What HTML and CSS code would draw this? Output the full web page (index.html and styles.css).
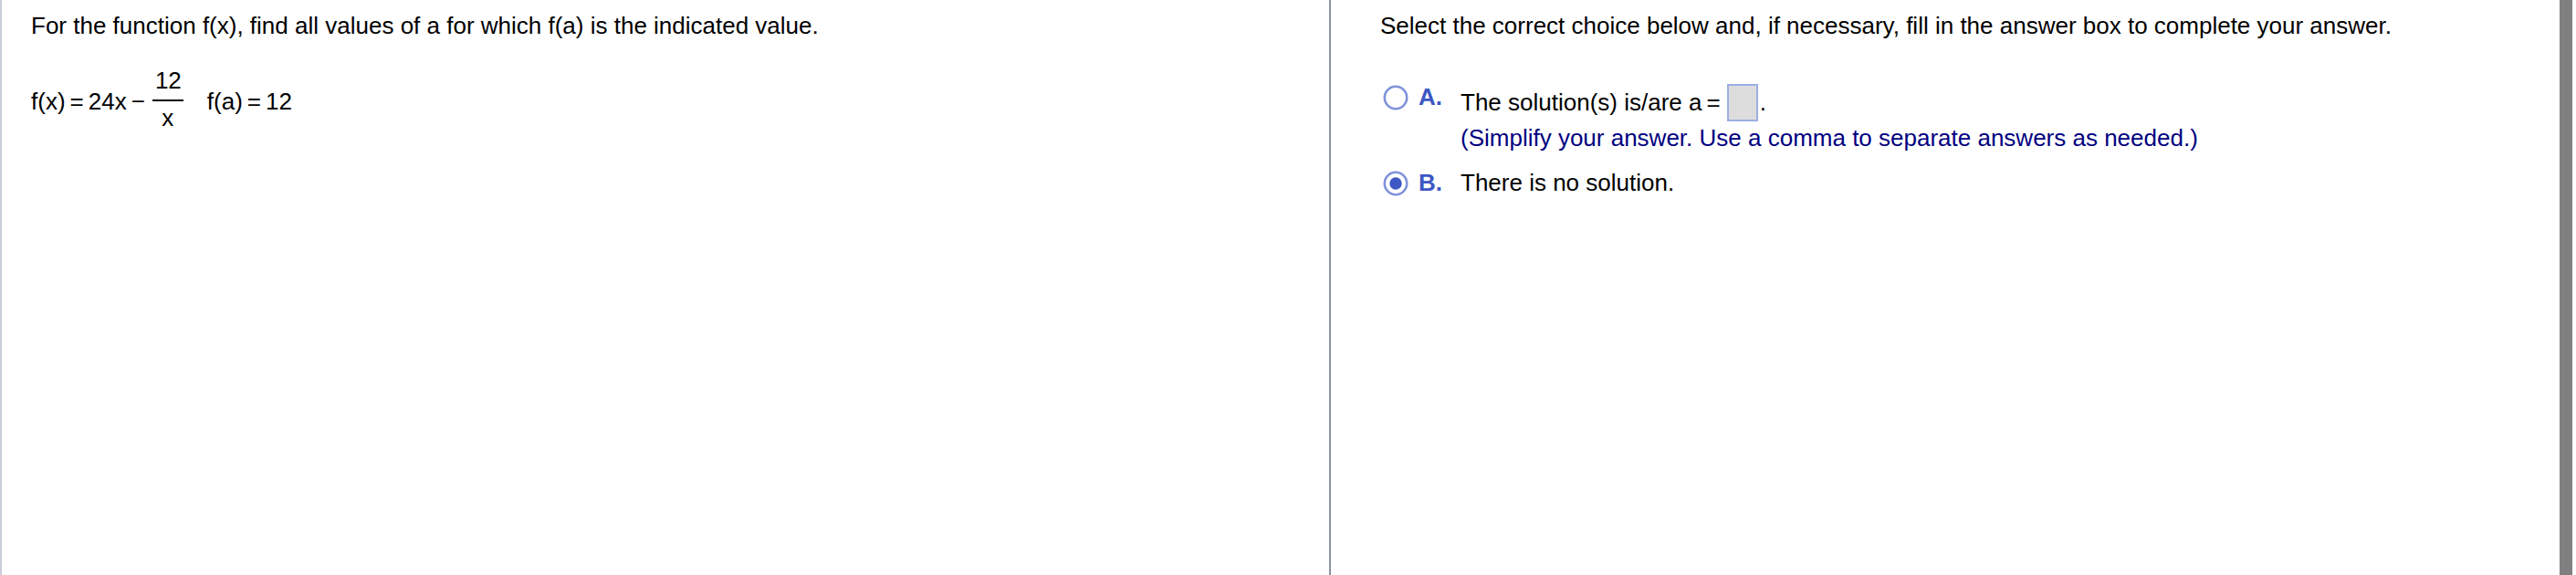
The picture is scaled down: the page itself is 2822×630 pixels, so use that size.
FILE: index.html
```
<!DOCTYPE html>
<html lang="en">
<head>
  <meta charset="UTF-8" />
  <title>Exercise</title>
  <link rel="stylesheet" href="styles.css">
</head>
<body>

<div class="exercise">
  <!-- QUESTION -->
  <div class="question">
    <p class="text">For the function f(x), find all values of a for which f(a) is the indicated value.</p>
    <div class="equation">
      <span>f(x)</span>
      <span class="op">=</span>
      <span>24x</span>
      <span class="op minus">−</span>
      <span class="fraction">
        <span class="numerator">12</span>
        <span class="denominator">x</span>
      </span>
      <span class="condition">f(a)</span>
      <span class="op">=</span>
      <span>12</span>
    </div>
  </div>

  <!-- ANSWER -->
  <div class="answer">
    <p class="text">Select the correct choice below and, if necessary, fill in the answer box to complete your answer.</p>
    <div class="choices">
      <div class="choice">
        <svg class="radio" viewBox="0 0 28 28">
          <circle class="ring" cx="14" cy="14" r="12.2" />
        </svg>
        <span class="letter">A.</span>
        <div class="choice-body">
          <div class="fill-in">
            <span>The solution(s) is/are a</span>
            <span class="op">=</span>
            <span class="answer-box"></span>
            <span>.</span>
          </div>
          <p class="hint">(Simplify your answer. Use a comma to separate answers as needed.)</p>
        </div>
      </div>
      <div class="choice">
        <svg class="radio" viewBox="0 0 28 28">
          <circle class="ring" cx="14" cy="14" r="12.2" />
          <circle class="dot" cx="14" cy="14" r="6.7" />
        </svg>
        <span class="letter">B.</span>
        <div class="choice-body">
          <p>There is no solution.</p>
        </div>
      </div>
    </div>
  </div>

  <div class="scrollbar"></div>
</div>

</body>
</html>
```
FILE: styles.css
```
* {
  box-sizing: border-box;
}

body {
  margin: 0;
  background: #fff;
  color: #000;
  font-family: "Liberation Sans", Arial, sans-serif;
  font-size: 26px;
  line-height: 30px;
}

p {
  margin: 0;
}

.exercise {
  display: flex;
  height: 630px;
  padding-right: 4px;
  white-space: nowrap;
  overflow: hidden;
}

.question {
  width: 1456px;
  padding: 13px 0 0 32px;
  border-left: 2px solid #c9cddb;
}

.equation {
  display: flex;
  align-items: center;
  height: 76px;
  margin-top: 30px;
}

.op {
  margin: 0 5px;
}

.minus {
  margin-right: 8px;
}

.fraction {
  display: flex;
  flex-direction: column;
  width: 34px;
  text-align: center;
}

.numerator {
  height: 38px;
  padding-left: 1px;
  border-bottom: 2px solid #000;
}

.denominator {
  height: 38px;
  padding-top: 3px;
}

.condition {
  margin-left: 26px;
}

.answer {
  flex: 1;
  padding: 13px 0 0 54px;
  border-left: 2px solid #8a93a3;
}

.choices {
  margin-top: 48px;
}

.choice {
  display: flex;
  align-items: flex-start;
  margin-bottom: 19px;
}

.radio {
  width: 28px;
  height: 28px;
  margin: 2px 0 0 3px;
}

.ring {
  fill: #fff;
  stroke: #7f92da;
  stroke-width: 2.6;
}

.dot {
  fill: #3d57c4;
}

.letter {
  width: 46px;
  margin-left: 11px;
  color: #3d57c4;
  font-weight: bold;
}

.fill-in {
  display: flex;
  align-items: center;
  height: 42px;
}

.answer-box {
  width: 34px;
  height: 41px;
  margin: 0 2px;
  background: #ddd;
  border: 2px solid #9aafe2;
}

.hint {
  margin-top: 3px;
  color: #00007f;
}

.scrollbar {
  width: 14px;
  background: #808080;
}
```
